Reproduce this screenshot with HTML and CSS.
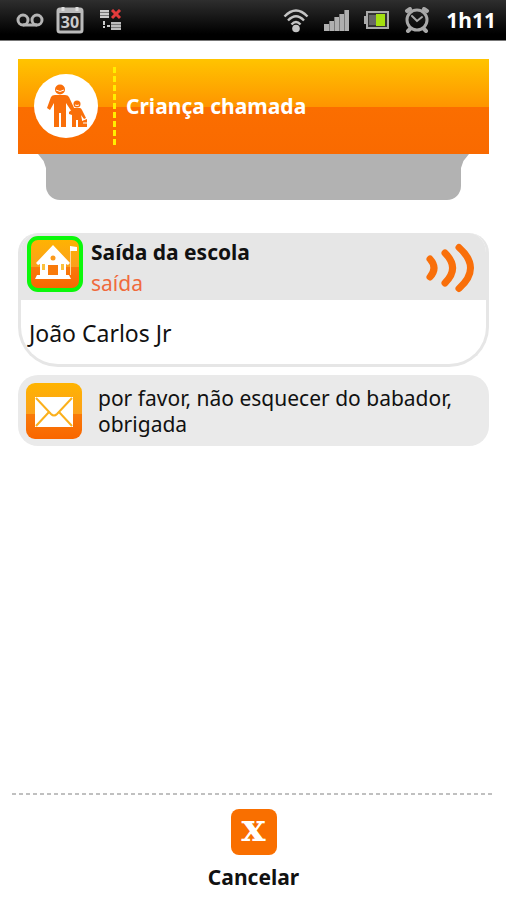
FILE: index.html
```html
<!DOCTYPE html>
<html lang="pt">
<head>
    <meta charset="UTF-8">
    <meta name="viewport" content="width=device-width, initial-scale=1">
    <title>Criança chamada</title>
    <link rel="stylesheet" href="styles.css">
</head>
<body>
    <div id="statusbar">
        <svg class="voicemail" width="28" height="16" viewBox="0 0 28 16">
            <g fill="none" stroke="#b4b4b4" stroke-width="3">
                <circle cx="7" cy="8" r="5"/>
                <circle cx="21" cy="8" r="5"/>
                <path d="M7 13h14"/>
            </g>
        </svg>
        <svg class="calendar" width="28" height="28" viewBox="0 0 28 28">
            <rect x="2" y="3" width="24" height="23" rx="2" fill="#222" stroke="#bbb" stroke-width="3"/>
            <path d="M2 5h24" stroke="#bbb" stroke-width="4"/>
            <path d="M7 1v4M21 1v4" stroke="#ddd" stroke-width="3"/>
            <text x="14" y="22" text-anchor="middle">30</text>
        </svg>
        <svg class="sync" width="22" height="22" viewBox="0 0 22 22">
            <path d="M0 1h9v8H0zM11 13h10v8H11z" fill="#777"/>
            <path d="M0 2h9M0 5h9M0 8h9" stroke="#ccc" stroke-width="2"/>
            <path d="M11 14h10M11 17h10M11 20h10" stroke="#bbb" stroke-width="2"/>
            <path d="M4 12v4M4 17v2M7 17h3" stroke="#ccc" stroke-width="2"/>
            <path d="M12 1l8 8M20 1l-8 8" stroke="#e23b3b" stroke-width="3"/>
        </svg>
        <svg class="wifi" width="26" height="25" viewBox="0 0 26 25">
            <g fill="none" stroke="#c4c4c4" stroke-width="2.4">
                <path d="M1.500 8.500q11.500-12 23 0"/>
                <path d="M5 12.500q8-8.500 16 0"/>
                <path d="M8.500 16.500q4.500-5 9 0"/>
            </g>
            <circle cx="13" cy="20.500" r="3.800" fill="#c4c4c4"/>
        </svg>
        <svg class="signal" width="25" height="21" viewBox="0 0 25 21">
            <path d="M0 14h5v7H0zM5 11h5v10H5zM10 7h5v14h-5zM15 4h5v17h-5zM20 0h5v21h-5z" fill="#b0b0b0"/>
            <path d="M5.500 11v10M10.500 7v14M15.500 4v17M20.500 0v21" stroke="#777"/>
        </svg>
        <svg class="battery" width="25" height="18" viewBox="0 0 25 18">
            <rect x="3" y="1" width="21" height="16" fill="#333" stroke="#aaa" stroke-width="2"/>
            <path d="M1 5v8" stroke="#aaa" stroke-width="2"/>
            <path d="M5 4h7v10H5z" fill="#666"/>
            <path d="M12 3h9v12h-9z" fill="#a4e010"/>
        </svg>
        <svg class="alarm" width="26" height="26" viewBox="0 0 26 26">
            <g fill="none" stroke="#a8a8a8" stroke-linecap="round">
                <circle cx="13" cy="13" r="10" stroke-width="3"/>
                <path d="M3 4l3-2M23 4l-3-2M6 22l-2 2M20 22l2 2" stroke-width="4"/>
                <path d="M8 9l5 5 5-4" stroke-width="2"/>
            </g>
        </svg>
        <span class="clock">1h11</span>
    </div>

    <div id="content">
        <div class="banner">
            <svg class="family" width="64" height="64" viewBox="0 0 64 64">
                <circle cx="32" cy="32" r="32" fill="#fff"/>
                <g fill="#f96f0a">
                    <circle cx="26" cy="15.500" r="5"/>
                    <path d="M21 21h10q3 0 4 2l6 13-3 2-6-9v24h-5V39h-2v14h-5V29l-4 7-3-2 4-11q1-2 4-2z"/>
                    <circle cx="43" cy="30" r="3.500"/>
                    <path d="M40 34h6q1 0 2 2l4 8-2 1-3-4 1 5v7h-4v-7h-2v7h-4V41l-3-1v-2z"/>
                    <path d="M48 47l5-2v8h-5z"/>
                </g>
                <path d="M22 16q4 3 8 0M41 31q2 1 4 0M49 49h4" fill="none" stroke="#fff"/>
            </svg>
            <h1>Criança chamada</h1>
        </div>
        <div class="tray"></div>

        <div class="card">
            <div class="card-head">
                <svg class="school" width="56" height="56" viewBox="0 0 56 56">
                    <defs>
                        <linearGradient id="tile" x1="0" y1="0" x2="0" y2="1">
                            <stop offset="0" stop-color="#ffb400"/>
                            <stop offset=".56" stop-color="#fba01c"/>
                            <stop offset=".56" stop-color="#f97a0a"/>
                            <stop offset="1" stop-color="#f96600"/>
                        </linearGradient>
                    </defs>
                    <rect x="2" y="2" width="52" height="52" rx="9" fill="url(#tile)" stroke="#0bf80b" stroke-width="4"/>
                    <path d="M9 27l17-18 17 18-2 2-2-1v11h3l2 4H8l2-4h3V28l-2 1z" fill="#fff"/>
                    <circle cx="26" cy="22" r="2.500" fill="#fb9a1c"/>
                    <path d="M21 29h10v10H21z" fill="#f97a0a"/>
                    <path d="M15 28h3v6h-3zM34 28h3v6h-3z" fill="#fbc13c"/>
                    <path d="M43.500 10v29" stroke="#ffd9a0"/>
                    <path d="M43 10l7 1v4h-7z" fill="#fff"/>
                </svg>
                <div class="card-title">
                    <h2>Saída da escola</h2>
                    <p>saída</p>
                </div>
                <svg class="waves" width="50" height="50" viewBox="0 0 50 50">
                    <g fill="none" stroke="#f96f0a" stroke-width="7" stroke-linecap="round">
                        <path d="M6 16q8 9 0 18"/>
                        <path d="M21 10q15 15 0 30"/>
                        <path d="M35 4.500q23 20.500 0 41"/>
                    </g>
                </svg>
            </div>
            <p class="name">João Carlos Jr</p>
        </div>

        <div class="note">
            <svg class="mail" width="56" height="56" viewBox="0 0 56 56">
                <rect width="56" height="56" rx="9" fill="url(#tile)"/>
                <rect x="9" y="14" width="38" height="30" fill="#fff"/>
                <path d="M10 15l15 16q3 3 6 0l15-16M10 43l13-14M46 43L33 29" fill="none" stroke="#fbb01c" stroke-width="2"/>
            </svg>
            <p>por favor, não esquecer do babador, obrigada</p>
        </div>
    </div>

    <div id="footer">
        <button type="button" class="cancel">
            <span class="cross">x</span>
            <span>Cancelar</span>
        </button>
    </div>
</body>
</html>
```
FILE: styles.css
```css
*{
    margin: 0;
    padding: 0;
    box-sizing: border-box;
}
body{
    display: flex;
    flex-direction: column;
    min-height: 100vh;
    background: #fff;
    color: #111;
    font-family: "Noto Sans", "Open Sans", sans-serif;
    font-size: 21px;
    line-height: 26px;
}
svg{
    flex: none;
}

/* status bar */
#statusbar{
    display: flex;
    align-items: center;
    height: 41px;
    padding: 0 10px 0 16px;
    border-bottom: 1px solid #777;
    background: linear-gradient(#2e2e2e, #000 85%);
}
.calendar{
    margin-left: 12px;
}
.calendar text{
    fill: #ccc;
    font-size: 16px;
    font-weight: bold;
}
.sync{
    margin-left: 16px;
}
.wifi{
    margin-left: auto;
}
.signal,
.battery,
.alarm{
    margin-left: 15px;
}
.clock{
    margin-left: 16px;
    color: #fff;
    font-weight: bold;
}

#content{
    padding: 18px 17px 0 18px;
}

/* banner */
.banner{
    display: flex;
    align-items: center;
    height: 95px;
    padding: 0 16px 2px;
    background: linear-gradient(#ffc400, #fe9400 51%, #fb6e00 51%, #f96a00);
}
.banner h1{
    display: flex;
    align-items: center;
    height: 78px;
    margin-left: 15px;
    padding-left: 13px;
    background: repeating-linear-gradient(#ffee00 0 6px, transparent 6px 9px) left / 3px 100% no-repeat;
    color: #fff;
    font-size: 21px;
}
.tray{
    position: relative;
    height: 46px;
    margin: 0 28px 33px;
    border-radius: 0 0 14px 14px;
    background: #b2b2b2;
}
.tray::before,
.tray::after{
    content: "";
    position: absolute;
    top: 0;
    width: 8px;
    height: 14px;
    background: #b2b2b2;
}
.tray::before{
    right: 100%;
    clip-path: polygon(0 0, 100% 0, 100% 100%, 70% 50%);
}
.tray::after{
    left: 100%;
    clip-path: polygon(0 0, 100% 0, 30% 50%, 0 100%);
}

/* called child */
.card{
    overflow: hidden;
    border: 3px solid #e6e6e6;
    border-top: 0;
    border-radius: 20px 20px 40px 40px;
}
.card-head{
    display: flex;
    height: 67px;
    padding: 3px 12px 0 6px;
    background: #e6e6e6;
}
.card-title{
    flex: 1;
    margin-left: 8px;
}
.card-title h2{
    font-size: 21px;
    line-height: 32px;
}
.card-title p{
    color: #f06a3c;
    line-height: 30px;
}
.waves{
    align-self: center;
}
.name{
    padding: 20px 8px 18px;
    font-size: 23px;
}

/* message */
.note{
    display: flex;
    align-items: center;
    min-height: 71px;
    margin-top: 8px;
    padding: 7px 8px;
    border-radius: 20px;
    background: #eaeaea;
}
.note p{
    margin-left: 16px;
}

/* cancel */
#footer{
    display: flex;
    justify-content: center;
    margin: auto 11px 0 12px;
    padding: 16px 0 10px;
    background: repeating-linear-gradient(90deg, #c0c0c0 0 4px, transparent 4px 7px) top / 100% 2px no-repeat;
}
.cancel{
    display: flex;
    flex-direction: column;
    align-items: center;
    gap: 9px;
    border: 0;
    background: none;
    color: #111;
    font: bold 21px/26px "Noto Sans", "Open Sans", sans-serif;
    cursor: pointer;
}
.cross{
    width: 46px;
    height: 46px;
    border-radius: 8px;
    background: #f96f00;
    color: #fff;
    font: bold 40px/36px "DejaVu Serif", serif;
}
```
